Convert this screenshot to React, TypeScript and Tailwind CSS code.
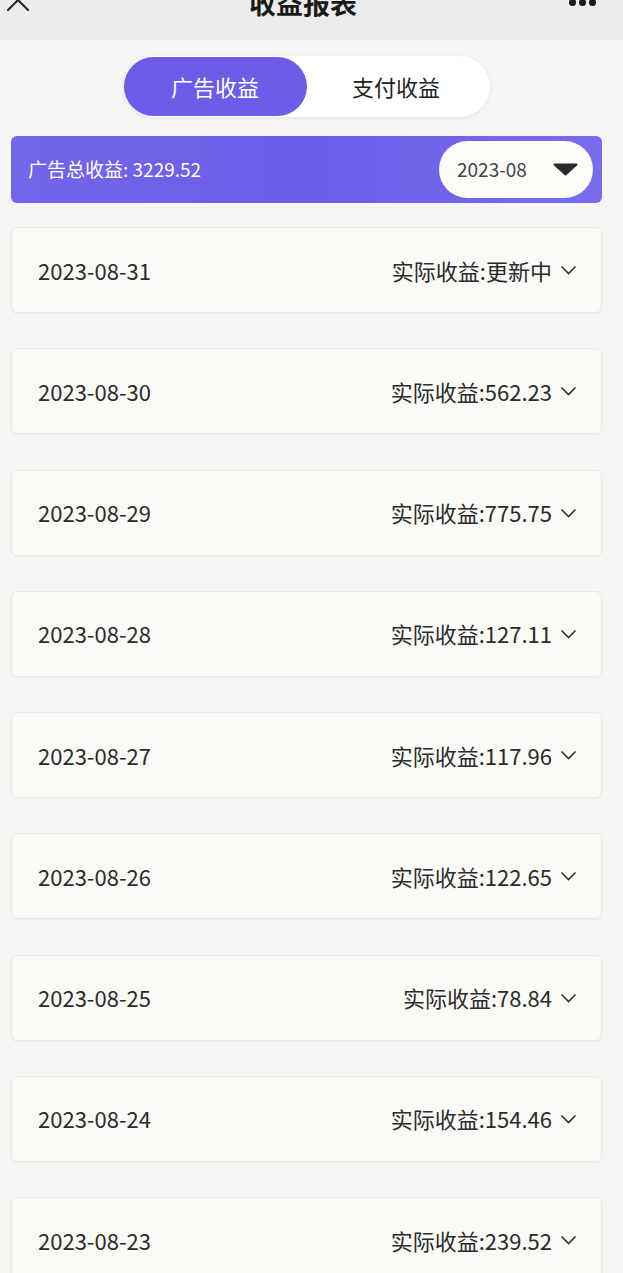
import { X } from "lucide-react"

const rows = [
  { date: "2023-08-31", value: "更新中" },
  { date: "2023-08-30", value: "562.23" },
  { date: "2023-08-29", value: "775.75" },
  { date: "2023-08-28", value: "127.11" },
  { date: "2023-08-27", value: "117.96" },
  { date: "2023-08-26", value: "122.65" },
  { date: "2023-08-25", value: "78.84" },
  { date: "2023-08-24", value: "154.46" },
  { date: "2023-08-23", value: "239.52" },
]

function Chevron() {
  return (
    <svg width="17" height="10" viewBox="0 0 17 10" className="ml-[8px] text-[#333]">
      <path d="M1.5 1.5 L8.5 8.5 L15.5 1.5" fill="none" stroke="currentColor" strokeWidth="1.6" />
    </svg>
  )
}

export default function App() {
  return (
    <div
      className="min-h-[1273px] bg-[#f5f5f3] overflow-hidden"
      style={{ fontFamily: '"Noto Sans CJK SC", "Noto Sans", sans-serif' }}
    >
      {/* header */}
      <div className="h-[40px] bg-[#ececec] grid grid-cols-[1fr_auto_1fr] items-start px-2">
        <X className="w-[40px] h-[40px] -mt-[20px] -ml-[10px] text-[#222]" strokeWidth={1.2} />
        <div className="text-[27px] leading-[28px] -mt-[11px] font-bold text-[#1a1a1a] mr-[17px]">
          收益报表
        </div>
        <div className="flex gap-[3px] mr-[19px] -mt-[1px] justify-self-end">
          <span className="w-[7px] h-[7px] rounded-full bg-[#1a1a1a]" />
          <span className="w-[7px] h-[7px] rounded-full bg-[#1a1a1a]" />
          <span className="w-[7px] h-[7px] rounded-full bg-[#1a1a1a]" />
        </div>
      </div>

      <div className="w-[613px] px-[11px]">
        {/* tabs */}
        <div className="flex justify-center mt-[16px]">
          <div className="w-[366px] h-[61px] rounded-full bg-white shadow-[0_1px_4px_rgba(0,0,0,0.08)] flex items-center">
            <div className="w-[183px] h-[59px] rounded-full bg-[#6c5ce7] text-white text-[22px] flex items-center justify-center">
              广告收益
            </div>
            <div className="flex-1 text-[22px] text-[#222] flex items-center justify-center pr-[4px]">
              支付收益
            </div>
          </div>
        </div>

        {/* summary */}
        <div className="mt-[19px] h-[67px] rounded-md bg-gradient-to-r from-[#7466e8] via-[#6a5ce6] to-[#7a6cee] flex items-center justify-between pl-[17px] pr-[9px]">
          <span className="text-white text-[19px]">广告总收益: 3229.52</span>
          <div className="w-[154px] h-[57px] rounded-full bg-[#fbfbf7] flex items-center pl-[18px] pr-[15px] justify-between">
            <span className="text-[19px] text-[#444]">2023-08</span>
            <svg width="25" height="13" viewBox="0 0 25 13">
              <path d="M1.5 1.5 H23.5 L12.5 11.5 Z" fill="#2a2a2a" strokeLinejoin="round" stroke="#2a2a2a" strokeWidth="2" />
            </svg>
          </div>
        </div>

        {/* list */}
        <div className="mt-[24px] flex flex-col gap-[35.25px]">
          {rows.map((r) => (
            <div
              key={r.date}
              className="h-[86px] rounded-md bg-[#f9f9f6] border border-[#e8e8e4] shadow-[0_1px_2px_rgba(0,0,0,0.03)] flex items-center justify-between pl-[26px] pr-[24px] shrink-0"
            >
              <span className="text-[22px] text-[#2b2b2b]">{r.date}</span>
              <div className="flex items-center">
                <span className="text-[22px] text-[#2b2b2b]">实际收益:{r.value}</span>
                <Chevron />
              </div>
            </div>
          ))}
        </div>
      </div>
    </div>
  )
}
